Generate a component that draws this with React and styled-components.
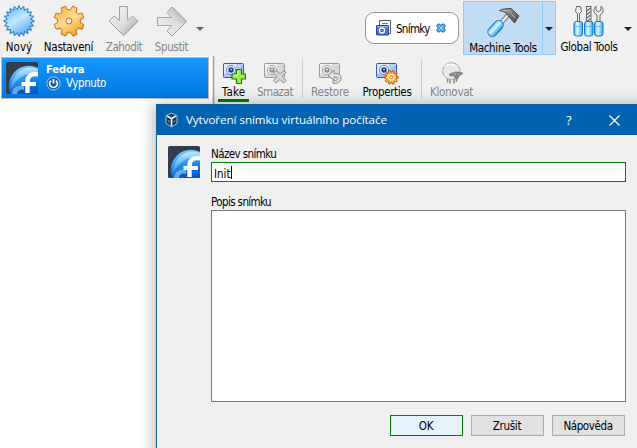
import React from 'react';
import styled, { createGlobalStyle, css } from 'styled-components';

const GlobalStyle = createGlobalStyle`
  * { box-sizing: border-box; }
  html, body { margin: 0; width: 637px; height: 448px; overflow: hidden; background: #f0f0f0; }
  svg { display: block; flex: none; }
`;

const Page = styled.div`
  position: relative;
  width: 637px;
  height: 448px;
  display: grid;
  grid-template-rows: 56px 1fr;
  overflow: hidden;
  background: #f0f0f0;
  color: #000;
  font: 11.5px/14px 'DejaVu Sans Condensed', 'DejaVu Sans', sans-serif;
`;

const Text = styled.span`
  white-space: nowrap;
  letter-spacing: ${(p) => p.$spacing || 0}px;
  line-height: 14px;
`;

const TopBar = styled.header`
  display: flex;
  height: 56px;
`;

const ToolButton = styled.div`
  flex: none;
  width: ${(p) => p.$width}px;
  display: flex;
  flex-direction: column;
  align-items: center;
  color: ${(p) => (p.$disabled ? '#858585' : '#000')};
`;

const BigTool = styled(ToolButton)`
  height: 55px;
  padding-top: 4px;
  gap: 2px;
`;

const SmallTool = styled(ToolButton)`
  height: 46px;
  padding-top: 5px;
  gap: 0;
  border-bottom: 3px solid ${(p) => (p.$active ? '#008000' : 'transparent')};
`;

const DropArrow = styled.div`
  flex: none;
  width: ${(p) => p.$width}px;
  display: flex;
  justify-content: center;
  align-items: center;
  height: 57px;
  &::after {
    content: '';
    border: 4px solid transparent;
    border-top-color: ${(p) => p.$color || '#222'};
    border-bottom: 0;
  }
`;

const ToolTab = styled.div`
  margin: 12px 4px 0 159px;
  width: 94px;
  height: 32px;
  display: flex;
  align-items: center;
  padding: 0 0 1px 10px;
  border: 1px solid #979797;
  border-radius: 9px;
  background: #fff;
`;

const TabTitle = styled(Text)`
  width: 35px;
  margin: 2px 5px 0 4px;
`;

const SelectedTool = styled.div`
  display: flex;
  flex: none;
  width: 93px;
  height: 54px;
  margin: 1px 0 0;
  border: 1px solid #91c9f7;
  background: #c1dcf3;
  ${BigTool} { height: 52px; padding-top: 3px; border-right: 1px solid #91c9f7; }
  ${DropArrow} { height: 53px; }
`;

const Main = styled.main`
  display: grid;
  grid-template-columns: 212px 3px 1fr;
`;

const MachineList = styled.aside`
  background: #fff;
  padding: 1px 3px 0 1px;
`;

const MachineItem = styled.div`
  display: flex;
  height: 42px;
  padding: 4px;
  gap: 8px;
  color: #fff;
  border: 1px solid #b9b9b9;
  background: linear-gradient(#1897ff, #0077dd);
`;

const MachineInfo = styled.div`
  display: flex;
  flex-direction: column;
`;

const MachineName = styled(Text)`
  font-size: 11px;
  font-weight: bold;
  height: 14px;
  margin-top: 1px;
`;

const MachineState = styled.div`
  display: flex;
  gap: 5px;
  margin-top: -1px;
  height: 15px;
`;

const Splitter = styled.div`
  background: linear-gradient(90deg, #e5e5e5 0 1px, #a0a0a0 1px 2px, #d6d6d6 2px);
`;

const SnapshotBar = styled.nav`
  display: flex;
  padding-left: 3px;
  background: #f0f0f0;
`;

const Separator = styled.i`
  flex: none;
  width: 1px;
  height: 39px;
  margin: ${(p) => p.$margin};
  background: #cdcdcd;
`;

const Dialog = styled.section`
  position: absolute;
  left: 156px;
  top: 104px;
  width: 492px;
  height: 356px;
  border: 1px solid #155f9f;
  background: #f0f0f0;
  box-shadow: 0 3px 14px 2px rgba(0, 0, 0, 0.3);
`;

const TitleBar = styled.header`
  height: 30px;
  display: flex;
  align-items: center;
  padding: 0 0 0 8px;
  color: #fff;
  background: #0063b1;
`;

const Title = styled.h1`
  margin: 0 0 0 8px;
  width: 380px;
  font: 400 11.6px/16px 'Open Sans', 'Noto Sans', sans-serif;
  letter-spacing: -0.05px;
  white-space: nowrap;
`;

const HelpMark = styled.span`
  width: 12px;
  margin-right: 31px;
  font: 400 13px/16px 'Open Sans', 'Noto Sans', sans-serif;
`;

const DialogBody = styled.div`
  display: grid;
  grid-template-columns: 32px 415px;
  column-gap: 11px;
  padding: 11px 0 0 11px;
`;

const Form = styled.div`
  display: flex;
  flex-direction: column;
`;

const FieldLabel = styled(Text)`
  height: 16px;
  padding-top: 1px;
`;

const NameField = styled.div`
  display: flex;
  height: 20px;
  padding: 3px 2px 2px;
  margin-bottom: 12px;
  border: 1px solid #008000;
  background: #fff;
  ${Text} { padding-top: 1px; }
`;

const Caret = styled.i`
  width: 1px;
  height: 13px;
  background: #000;
`;

const Description = styled.div`
  height: 192px;
  border: 1px solid #7a7a7a;
  background: #fff;
`;

const Buttons = styled.footer`
  display: flex;
  justify-content: flex-end;
  gap: 8px;
  padding: 13px 1px 0 0;
`;

const Button = styled.button`
  width: 73px;
  height: 21px;
  padding: 1px 1px 0 0;
  font: inherit;
  line-height: 14px;
  color: #000;
  border: 1px solid #adadad;
  background: #e1e1e1;
  ${(p) =>
    p.$primary &&
    css`
      border-color: #008000;
      background: #e5f1fb;
    `}
`;

const starPoints = Array.from({ length: 40 }, (_, i) => {
  const r = i % 2 ? 11.8 : 15.4;
  const a = (i * Math.PI) / 20;
  return `${(17 + r * Math.sin(a)).toFixed(2)},${(17 - r * Math.cos(a)).toFixed(2)}`;
}).join(' ');

const StarIcon = () => (
  <svg width="34" height="34" viewBox="0 0 34 34">
    <defs>
      <linearGradient id="star" x1="0.2" y1="0" x2="0.8" y2="1">
        <stop offset="0" stopColor="#5bb9f8" /><stop offset=".45" stopColor="#c5e7ff" /><stop offset="1" stopColor="#3fa2ee" />
      </linearGradient>
    </defs>
    <polygon points={starPoints} fill="#8b98a5" opacity=".35" transform="translate(.8 1.2)" />
    <polygon points={starPoints} fill="url(#star)" stroke="#2379c4" strokeWidth="1" />
  </svg>
);

const gearPath = (c, outer, inner, teeth) => {
  const step = (Math.PI * 2) / teeth;
  const pts = [];
  for (let i = 0; i < teeth; i += 1) {
    [[-0.32, inner], [-0.2, outer], [0.2, outer], [0.32, inner]].forEach(([o, r]) => {
      const a = (i + 0.5 + o) * step;
      pts.push(`${(c + r * Math.sin(a)).toFixed(2)} ${(c - r * Math.cos(a)).toFixed(2)}`);
    });
  }
  return `M${pts.join('L')}Z`;
};

const GearIcon = () => (
  <svg width="34" height="34" viewBox="0 0 34 34">
    <defs>
      <linearGradient id="gear" x1="0.1" y1="0" x2="0.8" y2="1">
        <stop offset="0" stopColor="#ffb23a" /><stop offset=".5" stopColor="#ffdc98" /><stop offset="1" stopColor="#f79a12" />
      </linearGradient>
    </defs>
    <path d={gearPath(17, 15.2, 11.4, 8)} fill="#888" opacity=".4" transform="translate(.8 1.4)" />
    <path d={gearPath(17, 15.2, 11.4, 8)} fill="url(#gear)" stroke="#c5730a" strokeLinejoin="round" />
    <circle cx="17" cy="17" r="3" fill="#f0f0f0" stroke="#c5730a" />
  </svg>
);

const ArrowIcon = ({ right }) => (
  <svg width="34" height="34" viewBox="0 0 34 34">
    <defs>
      <linearGradient id={right ? 'arR' : 'arD'} x1="0" y1="0" x2="1" y2="1">
        <stop offset="0" stopColor="#f5f5f5" /><stop offset=".55" stopColor="#dedede" /><stop offset=".75" stopColor="#c2c2c2" /><stop offset="1" stopColor="#e7e7e7" />
      </linearGradient>
    </defs>
    <g transform={right ? 'rotate(-90 17 17)' : undefined} strokeLinejoin="round">
      <path d="M12.5 2.5h8v14l5-4.5 5.500 5-14.500 14.500L2 17l5-5 5.500 4.500z" fill="#999" opacity=".3" transform="translate(.6 .8)" />
      <path d="M12.500 2.500h8v14l5-4.500 5.500 5-14.500 14.500L2 17l5-5 5.500 4.500z" fill={right ? 'url(#arR)' : 'url(#arD)'} stroke="#a3a3a3" />
    </g>
  </svg>
);

const FedoraIcon = ({ id }) => (
  <svg width="32" height="32" viewBox="0 0 32 32">
    <defs>
      <linearGradient id={`${id}b`} x1="0" y1="0" x2=".25" y2="1">
        <stop offset="0" stopColor="#9adbff" /><stop offset=".3" stopColor="#3ba6f8" /><stop offset=".6" stopColor="#0c6fe0" /><stop offset="1" stopColor="#06379f" />
      </linearGradient>
      <linearGradient id={`${id}h`} x1="0" y1="0" x2="0" y2="1">
        <stop offset="0" stopColor="#d8f3ff" stopOpacity=".75" /><stop offset="1" stopColor="#8ed1ff" stopOpacity=".25" />
      </linearGradient>
      <clipPath id={`${id}c`}><rect width="32" height="32" rx="1.500" /></clipPath>
    </defs>
    <g clipPath={`url(#${id}c)`}>
      <rect width="32" height="32" fill="#343b4b" />
      <circle cx="23" cy="24" r="20.200" fill={`url(#${id}b)`} />
      <path d="M5 27C6 13 14 5.500 25 5.500c3 0 5 .5 8 1.500v4C20 10 11 15 5 27z" fill={`url(#${id}h)`} />
      <path d="M6 32c0-6 5-9.500 12-8v8z" fill="#7dbcf5" opacity=".8" />
      <path d="M11 32c0-4 4-5.500 8-4v4z" fill="#0d55bb" />
      <path d="M33 12.500c-7.500-1.300-11.500 1-11.500 7V31" fill="none" stroke="#fff" strokeWidth="4.400" />
      <path d="M15.500 22H30" stroke="#fff" strokeWidth="3.800" />
    </g>
  </svg>
);

const PowerIcon = () => (
  <svg width="15" height="15" viewBox="0 0 15 15">
    <circle cx="7.500" cy="7.500" r="6.600" fill="#1263ae" stroke="#a5c5e0" />
    <path d="M5 4.600a3.900 3.900 0 1 0 5 0M7.500 3v4.500" fill="none" stroke="#fff" strokeWidth="1.700" />
  </svg>
);

const Camera = ({ gray }) => (
  <>
    <rect x="1.500" y="2.500" width="20" height="14" rx="1" fill={gray ? '#dadada' : '#a9c4f8'} stroke={gray ? '#9a9a9a' : '#3156b8'} />
    <path d="M2 3h19v2L2 13z" fill={gray ? '#efefef' : '#dfe9ff'} />
    <rect x="15" y="4" width="5" height="2" fill={gray ? '#fafafa' : '#fff'} stroke={gray ? '#aaa' : '#6d91db'} strokeWidth=".7" />
    <circle cx="9" cy="9" r="4.600" fill={gray ? '#f2f2f2' : '#edf3ff'} stroke={gray ? '#a4a4a4' : '#6a86bd'} />
    <circle cx="9" cy="9" r="2.700" fill={gray ? '#8d8d8d' : '#193e83'} />
    <circle cx="9" cy="8.500" r="1.100" fill={gray ? '#e5e5e5' : '#8bb7f5'} />
  </>
);

const TakeIcon = () => (
  <svg width="24" height="24" viewBox="0 0 24 24">
    <Camera />
    <path d="M14.500 8.500h5V13h4v5h-4v4.500h-5V18H10v-5h4.500z" fill="#a0ec4c" stroke="#237812" strokeWidth="1.200" strokeLinejoin="round" />
    <path d="M15.700 10v4.300H11.500" fill="none" stroke="#e0ffc0" />
  </svg>
);

const DeleteIcon = () => (
  <svg width="24" height="24" viewBox="0 0 24 24">
    <Camera gray />
    <path d="M13 9.500l4 3.500 4-3.500 2 2-3.500 4 3.500 4-2.500 2.500-3.500-3.500-4 3.500-2.500-2.500 3.500-4-3.500-3.500z" fill="#d5d5d5" stroke="#8c8c8c" strokeLinejoin="round" />
  </svg>
);

const RestoreIcon = () => (
  <svg width="24" height="24" viewBox="0 0 24 24">
    <Camera gray />
    <path d="M10 14.500l6-5.500v3.500c4-.500 7 1 7 4.500 0 4-3 5.500-8 5.500v-3c3 0 4.500-.500 4.500-2 0-1.200-1.500-1.500-3.500-1.300v3.300z" fill="#dedede" stroke="#8d8d8d" strokeLinejoin="round" />
  </svg>
);

const PropertiesIcon = () => (
  <svg width="24" height="24" viewBox="0 0 24 24">
    <Camera />
    <path d={gearPath(16.3, 6.9, 5.2, 10)} fill="#ffbf50" stroke="#b9500b" strokeWidth="1" strokeLinejoin="round" />
    <circle cx="16.300" cy="16.300" r="3.300" fill="#ffe2a2" />
    <circle cx="16.300" cy="16.300" r="1.400" fill="#fff" stroke="#c9701b" />
  </svg>
);

const SheepIcon = () => (
  <svg width="24" height="24" viewBox="0 0 24 24">
    <path d="M7.500 17v4.500M10 18v4.500M14 18v4.500M16.500 17v4" stroke="#8b8b8b" strokeWidth="1.500" />
    <path d="M5 4.500c3-3.500 10-3.500 13 0 2.500 3 2.500 8 .5 11-3 4-11 4-14 0C2 12.500 2 7.500 5 4.500z" fill="#e9e9e9" stroke="#a8a8a8" />
    <path d="M5.500 5.500c3-3 7-3 10 0" stroke="#fff" strokeWidth="1.500" fill="none" />
    <path d="M9.500 13l3.500-1.200 2-.8h3l4.500.7-.5 1.800-2.500.5-1.500 3.500-2.500.5-2-3.500-3.500.5z" fill="#858585" stroke="#777" strokeWidth=".7" />
    <circle cx="15" cy="13" r=".7" fill="#ddd" /><circle cx="18" cy="13" r=".6" fill="#ddd" />
  </svg>
);

const SnapshotsIcon = () => (
  <svg width="16" height="16" viewBox="0 0 16 16">
    <path d="M3.500 7V.5h11v13H13" fill="#fff" stroke="#555" />
    <path d="M6 3.500h6" stroke="#777" />
    <rect x=".500" y="5.500" width="12" height="9.500" rx=".5" fill="#4a74d8" stroke="#24439f" />
    <path d="M1 6h11v1.500H1z" fill="#8fb0f3" />
    <circle cx="6" cy="10.500" r="3.200" fill="#fff" /><circle cx="6" cy="10.500" r="1.800" fill="#244cae" /><circle cx="6" cy="10.500" r=".7" fill="#bfd6ff" />
  </svg>
);

const CloseTabIcon = () => (
  <svg width="10" height="10" viewBox="0 0 10 10">
    <path d="M2.500.7L5 2.300 7.500.7 9.400 2.500 7.800 5l1.600 2.500-1.900 1.900L5 7.800 2.500 9.400.6 7.500 2.200 5 .6 2.500z" fill="#55aaf0" stroke="#1d6fb9" strokeLinejoin="round" />
    <path d="M3 3l4 4M7 3L3 7" stroke="#a8dbff" />
  </svg>
);

const HammerIcon = () => (
  <svg width="34" height="34" viewBox="0 0 34 34">
    <defs>
      <linearGradient id="grip" x1="0" y1="0" x2="1" y2="0">
        <stop offset="0" stopColor="#67bff8" /><stop offset=".4" stopColor="#e2f5ff" /><stop offset="1" stopColor="#219bed" />
      </linearGradient>
      <linearGradient id="head" x1="0" y1="0" x2="1" y2="1">
        <stop offset="0" stopColor="#b5b5b5" /><stop offset=".5" stopColor="#757575" /><stop offset="1" stopColor="#4d4d4d" />
      </linearGradient>
    </defs>
    <path d="M14 19l9-10" stroke="#777" strokeWidth="4.500" />
    <path d="M14 19l9-10" stroke="#eee" strokeWidth="2.500" />
    <rect x="5" y="14.500" width="9" height="18" rx="4.200" transform="rotate(43 9.500 23.500)" fill="url(#grip)" stroke="#1679c6" />
    <path d="M13.500 5.500c3-1.500 7-2 11.500-2l8 7.500-4.500 7-6.500-7.500-2-3z" fill="url(#head)" stroke="#4c4c4c" strokeLinejoin="round" />
    <path d="M15 5.700l8.500.3 5.500 7" stroke="#bdbdbd" strokeWidth=".8" fill="none" />
  </svg>
);

const ToolsIcon = () => (
  <svg width="34" height="34" viewBox="0 0 34 34">
    <defs>
      <linearGradient id="handles"><stop offset="0" stopColor="#4fb4f4" /><stop offset=".4" stopColor="#e7f7ff" /><stop offset="1" stopColor="#35a3ed" /></linearGradient>
    </defs>
    <path d="M4.500 2.500h4l1 5-2 2V18h-2V9.500l-2-2z" fill="#eee" stroke="#666" />
    <rect x="14.500" y="2.500" width="4.500" height="16" fill="#f3f3f3" stroke="#666" />
    <path d="M15 7l3.500-3M15 10.500l3.500-3M15 14l3.500-3M15 17.500l3.500-3" stroke="#666" strokeWidth="1.200" />
    <path d="M25 18v-7c-4-2-4-6-1-9v4l2.500 2L29 6V2c3 3 3 7-1 9v7z" fill="#ececec" stroke="#666" />
    {[2, 12.5, 22.5].map((x) => (
      <g key={x}>
        <rect x={x} y="17.500" width="8.500" height="14.500" rx="2.500" fill="url(#handles)" stroke="#1477c2" />
        <path d={`M${x + 1.5} 22.500h5.500`} stroke="#3b9bdc" strokeWidth=".6" />
      </g>
    ))}
  </svg>
);

const BoxIcon = () => (
  <svg width="13" height="16" viewBox="0 0 13 16">
    <path d="M1 3.500L6.500 1 12 3.500v8L6.500 15 1 11.500z" fill="#163b63" stroke="#a9bfd6" />
    <path d="M2.200 4l4.300 2.700L10.800 4M6.500 6.500V14" fill="none" stroke="#fff" strokeWidth="1.500" />
    <path d="M3.800 8v2.500M9.200 8v2.500" stroke="#7897b8" strokeWidth=".9" />
  </svg>
);

const CloseIcon = () => (
  <svg width="11" height="11" viewBox="0 0 11 11">
    <path d="M.5.500l10 10M10.500.500l-10 10" stroke="#fff" strokeWidth="1.100" />
  </svg>
);

export default function App() {
  return (
    <>
      <GlobalStyle />
      <Page>
        <TopBar>
          <BigTool $width={38}><StarIcon /><Text>Nový</Text></BigTool>
          <BigTool $width={61}><GearIcon /><Text $spacing={-0.28}>Nastavení</Text></BigTool>
          <BigTool $width={50} $disabled><ArrowIcon /><Text $spacing={-0.5}>Zahodit</Text></BigTool>
          <BigTool $width={45} $disabled><ArrowIcon right /><Text $spacing={-0.35}>Spustit</Text></BigTool>
          <DropArrow $width={12} $color="#666" />
          <ToolTab>
            <SnapshotsIcon />
            <TabTitle $spacing={-0.7}>Snímky</TabTitle>
            <CloseTabIcon />
          </ToolTab>
          <SelectedTool>
            <BigTool $width={79}><HammerIcon /><Text $spacing={-0.32}>Machine Tools</Text></BigTool>
            <DropArrow $width={12} />
          </SelectedTool>
          <BigTool $width={66}><ToolsIcon /><Text $spacing={-0.37}>Global Tools</Text></BigTool>
          <DropArrow $width={11} />
        </TopBar>
        <Main>
          <MachineList>
            <MachineItem>
              <FedoraIcon id="list" />
              <MachineInfo>
                <MachineName>Fedora</MachineName>
                <MachineState><PowerIcon /><Text $spacing={-0.42}>Vypnuto</Text></MachineState>
              </MachineInfo>
            </MachineItem>
          </MachineList>
          <Splitter />
          <SnapshotBar>
            <SmallTool $width={31} $active><TakeIcon /><Text $spacing={0.15}>Take</Text></SmallTool>
            <SmallTool $width={52} $disabled><DeleteIcon /><Text $spacing={-0.45}>Smazat</Text></SmallTool>
            <Separator $margin="3px 0 0 1px" />
            <SmallTool $width={54} $disabled><RestoreIcon /><Text $spacing={-0.2}>Restore</Text></SmallTool>
            <SmallTool $width={60}><PropertiesIcon /><Text $spacing={-0.33}>Properties</Text></SmallTool>
            <Separator $margin="3px 3px 0 4px" />
            <SmallTool $width={53} $disabled><SheepIcon /><Text $spacing={-0.28}>Klonovat</Text></SmallTool>
          </SnapshotBar>
        </Main>
        <Dialog>
          <TitleBar>
            <BoxIcon />
            <Title>Vytvoření snímku virtuálního počítače</Title>
            <HelpMark>?</HelpMark>
            <CloseIcon />
          </TitleBar>
          <DialogBody>
            <FedoraIcon id="dialog" />
            <Form>
              <FieldLabel $spacing={-0.6}>Název snímku</FieldLabel>
              <NameField><Text>Init</Text><Caret /></NameField>
              <FieldLabel $spacing={-0.61}>Popis snímku</FieldLabel>
              <Description />
              <Buttons>
                <Button $primary><Text $spacing={-0.3}>OK</Text></Button>
                <Button><Text $spacing={-0.3}>Zrušit</Text></Button>
                <Button><Text $spacing={-0.4}>Nápověda</Text></Button>
              </Buttons>
            </Form>
          </DialogBody>
        </Dialog>
      </Page>
    </>
  );
}
